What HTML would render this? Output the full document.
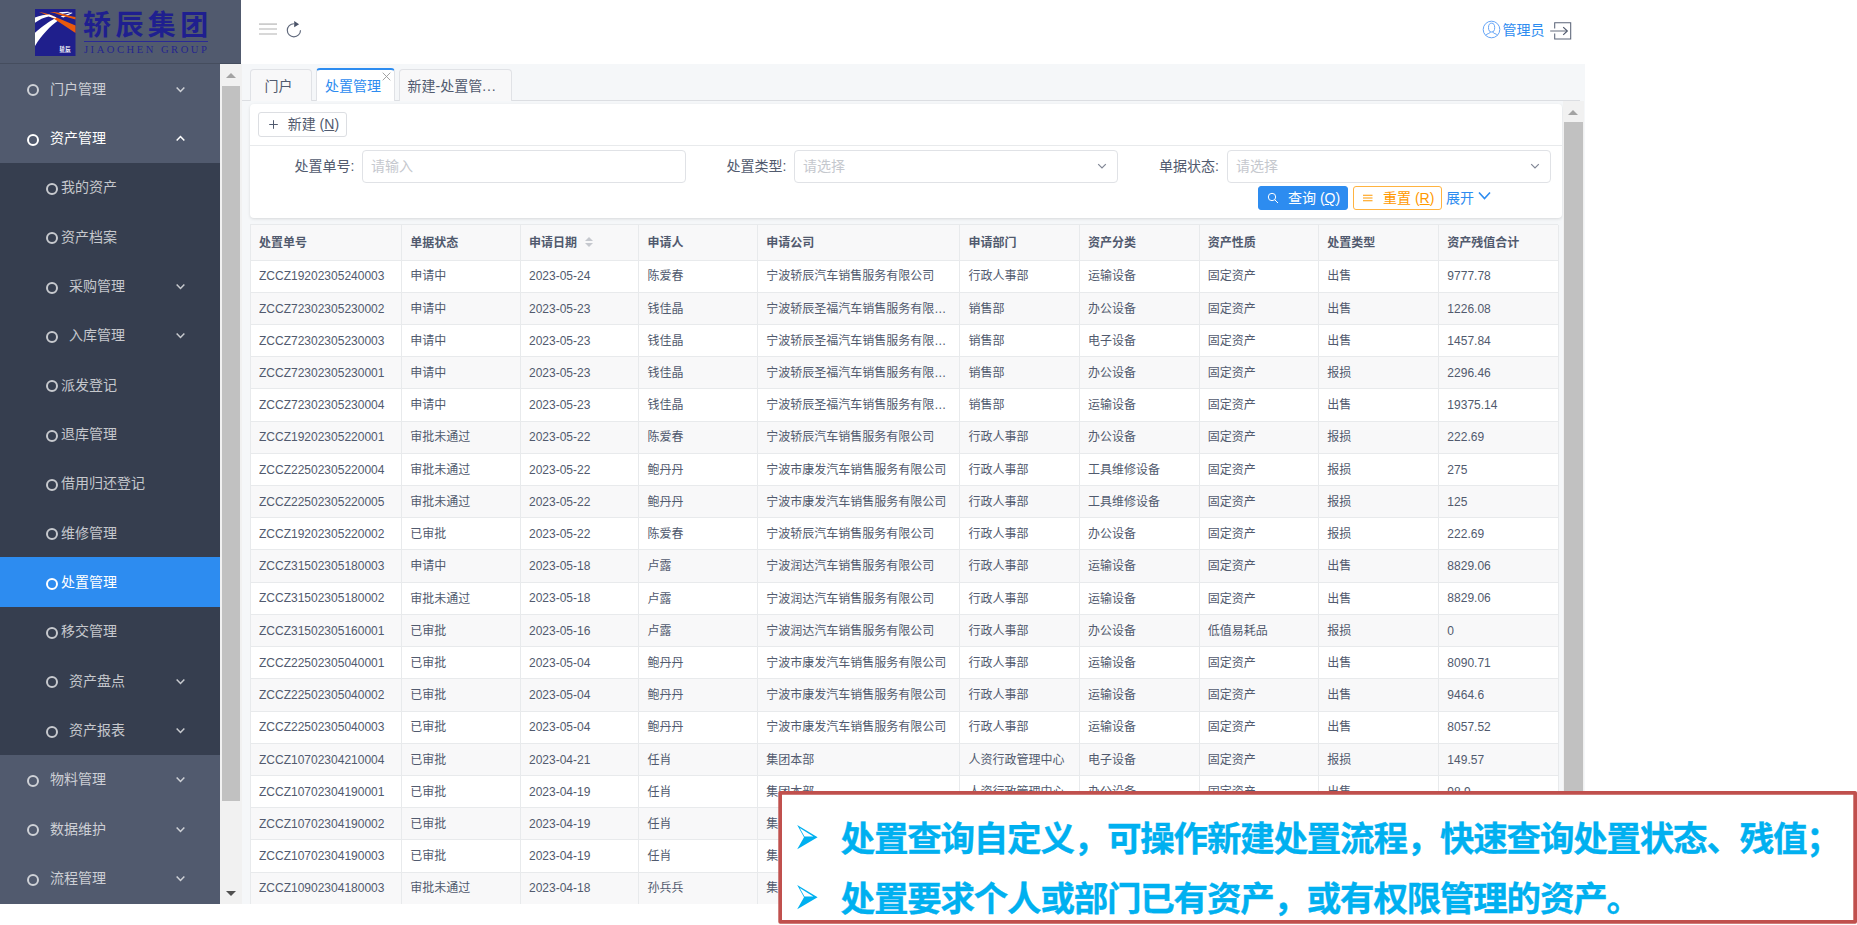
<!DOCTYPE html>
<html lang="zh-CN">
<head>
<meta charset="utf-8">
<title>处置管理</title>
<style>
*{box-sizing:border-box;margin:0;padding:0}
html,body{width:1857px;height:925px;overflow:hidden;background:#fff}
body{font-family:"Liberation Sans","Noto Sans CJK SC",sans-serif;font-size:14px;color:#515a6e;position:relative}
ul{list-style:none}
/* ---------- app frame ---------- */
#app{position:absolute;left:0;top:0;width:1585px;height:904px;background:#f5f7f9;overflow:hidden}
/* logo block */
#logo{position:absolute;left:0;top:0;width:241px;height:64px;background:#515a6e;border-bottom:1px solid #454d5e;z-index:3}
#logo .mark{position:absolute;left:35px;top:9px;width:40.5px;height:47px}
#logo .cn{position:absolute;left:83px;top:6.5px;height:38px;line-height:38px;font-size:28px;font-weight:700;color:#1f1f8f;letter-spacing:4.4px;white-space:nowrap;font-family:"Liberation Sans","Noto Sans CJK SC",sans-serif}
#logo .rule{position:absolute;left:84px;top:41px;width:124px;height:1px;background:#2a2a96}
#logo .en{position:absolute;left:84px;top:43.5px;height:12px;line-height:12px;font-size:10.6px;color:#25258f;letter-spacing:2.5px;white-space:nowrap;font-family:"Liberation Serif",serif}
/* side menu */
#side{position:absolute;left:0;top:64px;width:220px;height:840px;background:#515a6e;overflow:hidden}
#side .mi{position:relative;height:49.33px;line-height:49.33px;color:rgba(255,255,255,.72);font-size:14px;white-space:nowrap}
#side .mi span{position:absolute;left:50px;top:0.6px}
#side .mi .ring{position:absolute;left:27.3px;top:20.3px;width:12px;height:12px;border:2px solid currentColor;border-radius:50%}
#side .mi .chev{position:absolute;left:175.3px;top:19.6px;width:11px;height:11px}
#side .mi.topopen{color:#fff}
#side .mi.leaf,#side .mi.sub,#side .mi.active{background:#363e4f}
#side .mi.leaf .ring,#side .mi.sub .ring,#side .mi.active .ring{left:46px}
#side .mi.leaf span,#side .mi.active span{left:61px}
#side .mi.sub span{left:69px}
#side .mi.active{background:#2d8cf0;color:#fff}
/* side scrollbar */
.sbar{position:absolute;background:#f1f1f1}
.sbar .thumb{position:absolute;left:1.5px;right:1.5px;background:#c1c1c1}
.sbar .up,.sbar .dn{position:absolute;left:50%;width:0;height:0;border-left:5px solid transparent;border-right:5px solid transparent;margin-left:-5px}
.sbar .up{border-bottom:5px solid #a3a3a3}
.sbar .dn{border-top:5px solid #505050}
#sbar1{left:220px;top:64px;width:21.5px;height:840px}
#sbar1 .thumb{top:21.5px;height:715.5px}
#sbar1 .up{top:8.5px}
#sbar1 .dn{bottom:8px}
/* top header */
#head{position:absolute;left:241px;top:0;width:1344px;height:64px;background:#fff}
#head svg{position:absolute}
#head .user{position:absolute;left:1261.5px;top:19px;height:22px;line-height:22px;font-size:14px;color:#2d8cf0}
/* tabs */
#tabs{position:absolute;left:241.5px;top:64px;width:1343.5px;height:37px}
#tabs .line{position:absolute;left:0;top:36px;width:1338.5px;height:1px;background:#dcdee2}
.tab{position:absolute;top:5px;height:32px;line-height:32.5px;border:1px solid #e0e2e6;border-bottom:0;border-radius:4px 4px 0 0;background:#f8f8f9;font-size:14px;color:#515a6e;white-space:nowrap;padding-left:13.5px}
.tab.on{top:4px;height:33px;background:#fff;color:#2d8cf0;border-top:2px solid #2d8cf0;padding-left:8px;line-height:32.5px}
.tab .x{position:absolute;right:2.5px;top:2px;width:9px;height:9px}
/* content */
#main{position:absolute;left:241.5px;top:101px;width:1321px;height:803px;overflow:hidden}
#sbar2{left:1562.5px;top:101px;width:21.5px;height:803px}
#sbar2 .thumb{top:21px;height:740px}
#sbar2 .up{top:8.5px}
#sbar2 .dn{bottom:7px}
#card{position:absolute;left:8.5px;top:3px;width:1312px;height:114px;background:#fff;border-radius:4px;box-shadow:0 1px 3px rgba(0,0,0,.12)}
#card .hr{position:absolute;left:0;right:0;top:41px;height:1px;background:#e8eaec}
.btn{position:absolute;height:24px;line-height:22px;border:1px solid #dcdee2;border-radius:3px;background:#fff;font-size:14px;color:#515a6e;white-space:nowrap}
.btn u{text-decoration:underline}
#bnew{left:8px;top:8px;width:88.5px;height:24.5px;padding-left:28.7px;line-height:22.5px}
#bq{left:1008px;top:82px;width:90px;background:#2d8cf0;border-color:#2d8cf0;color:#fff;padding-left:29px}
#br{left:1103px;top:82px;width:89px;border-color:#ffb340;color:#ff9900;padding-left:29px}
.btn svg{position:absolute}
#more{position:absolute;left:1196px;top:82px;height:24px;line-height:24px;font-size:14px;color:#2d8cf0;white-space:nowrap}
.lab{position:absolute;top:46px;height:32px;line-height:33px;font-size:14px;color:#515a6e;text-align:right;white-space:nowrap}
.inp{position:absolute;top:46px;height:32.5px;line-height:30.5px;border:1px solid #e0e2e6;border-radius:4px;background:#fff;font-size:14px;color:#c5c8ce;padding-left:8px;white-space:nowrap}
.inp svg{position:absolute;right:10px;top:10.2px;width:10px;height:10px;color:#808695}
/* table */
#tbl{position:absolute;left:8.5px;top:123px;width:1308px;border-left:1px solid #e8eaec;border-top:1px solid #e8eaec}
table{border-collapse:separate;border-spacing:0;table-layout:fixed;width:1307.7px;font-size:12px;color:#515a6e}
th,td{border-right:1px solid #e8eaec;border-bottom:1px solid #e8eaec;text-align:left;padding:0 0 0 8px;overflow:hidden;white-space:nowrap}
th{height:35.5px;background:#f8f8f9;font-weight:700;color:#515a6e;font-size:12px}
td{height:32.22px;background:#fff}
tr.s td{background:#f8f8f9}
td .c{overflow:hidden;text-overflow:ellipsis;white-space:nowrap;padding-right:8px;position:relative;top:-1.3px}
td .c.n{top:0.2px}
th span{vertical-align:middle;position:relative;top:-0.8px}
.sort{display:inline-block;position:relative;width:9px;height:11px;margin-left:7.6px;vertical-align:middle;top:-0.2px}
.sort b{position:absolute;left:0;width:0;height:0;border-left:4.3px solid transparent;border-right:4.3px solid transparent}
.sort .u{top:0;border-bottom:4.3px solid #c5c8ce}
.sort .d{top:6.5px;border-top:4.2px solid #c5c8ce}
/* annotation callout */
#note{position:absolute;left:778px;top:791px;width:1079px;height:133px;z-index:10}
#note .frame{position:absolute;left:0;top:0;width:1079px;height:133px}
#note p{-webkit-text-stroke:0.35px #00b0f0;position:absolute;left:62.6px;height:48px;line-height:48px;font-size:34.5px;letter-spacing:-1.2px;font-weight:700;color:#00b0f0;white-space:nowrap;font-family:"Liberation Sans","Noto Sans CJK SC",sans-serif}
#note .p1{top:23.6px}
#note .p2{top:83.9px}
#note svg.ar{position:absolute;left:18px;width:23px;height:27px}
</style>
</head>
<body>
<div id="app">
  <div id="logo">
    <svg class="mark" viewBox="0 0 40.5 47">
      <rect width="40.5" height="47" fill="#1f1f8c"/>
      <path d="M0 23.8 C8 16.5 14 12.6 19.9 9.4 L23.2 11.6 C15 17.2 7 26 0 36.9 Z" fill="#fff"/>
      <path d="M25.5 7.6 L36.6 3.5 L37.6 4.1 L28.5 8.6 Z" fill="#fff"/>
      <path d="M3.9 3.1 C10 3.9 16 5.6 21 8.2 L40.5 16.5 L40.5 24 L22.4 12 C17 8.4 10 5.2 3.9 3.1 Z" fill="#ea5a0c"/>
      <path d="M14.4 3.1 C20 3 24 3.6 27.2 4.8 C32 6.4 37 7.4 40.5 7.9 L40.5 10.5 C35 9.1 30 7.6 25.2 6 C21 4.5 18 3.7 14.4 3.1 Z" fill="#ea5a0c"/>
      <path d="M0 8.6 C5 6.7 10 5.7 14.4 5.6 L21.4 8.5 L20.2 9.6 L13.6 7.4 C9 8.4 4 10.6 0 13.7 Z" fill="#fff"/>
      <path d="M23.4 3.3 L32.6 2.7 L36.2 3.2 L27.4 4.8 Z" fill="#fff"/>
      <text x="30.2" y="42" font-size="5.2" font-weight="700" fill="#fff" text-anchor="middle" letter-spacing="0.6" font-family="Liberation Sans, Noto Sans CJK SC, sans-serif">轿辰</text>
      <rect x="24.6" y="43.3" width="11.2" height="0.5" fill="#d8d8f0"/>
    </svg>
    <div class="cn">轿辰集团</div>
    <div class="rule"></div>
    <div class="en">JIAOCHEN GROUP</div>
  </div>
  <ul id="side">
<li class="mi top"><i class="ring"></i><span>门户管理</span><svg class="chev" viewBox="0 0 10 10"><path d="M1.5 3.2 L5 6.8 L8.5 3.2" fill="none" stroke="currentColor" stroke-width="1.4"/></svg></li>
<li class="mi topopen"><i class="ring"></i><span>资产管理</span><svg class="chev" viewBox="0 0 10 10"><path d="M1.5 6.8 L5 3.2 L8.5 6.8" fill="none" stroke="currentColor" stroke-width="1.4"/></svg></li>
<li class="mi leaf"><i class="ring"></i><span>我的资产</span></li>
<li class="mi leaf"><i class="ring"></i><span>资产档案</span></li>
<li class="mi sub"><i class="ring"></i><span>采购管理</span><svg class="chev" viewBox="0 0 10 10"><path d="M1.5 3.2 L5 6.8 L8.5 3.2" fill="none" stroke="currentColor" stroke-width="1.4"/></svg></li>
<li class="mi sub"><i class="ring"></i><span>入库管理</span><svg class="chev" viewBox="0 0 10 10"><path d="M1.5 3.2 L5 6.8 L8.5 3.2" fill="none" stroke="currentColor" stroke-width="1.4"/></svg></li>
<li class="mi leaf"><i class="ring"></i><span>派发登记</span></li>
<li class="mi leaf"><i class="ring"></i><span>退库管理</span></li>
<li class="mi leaf"><i class="ring"></i><span>借用归还登记</span></li>
<li class="mi leaf"><i class="ring"></i><span>维修管理</span></li>
<li class="mi active"><i class="ring"></i><span>处置管理</span></li>
<li class="mi leaf"><i class="ring"></i><span>移交管理</span></li>
<li class="mi sub"><i class="ring"></i><span>资产盘点</span><svg class="chev" viewBox="0 0 10 10"><path d="M1.5 3.2 L5 6.8 L8.5 3.2" fill="none" stroke="currentColor" stroke-width="1.4"/></svg></li>
<li class="mi sub"><i class="ring"></i><span>资产报表</span><svg class="chev" viewBox="0 0 10 10"><path d="M1.5 3.2 L5 6.8 L8.5 3.2" fill="none" stroke="currentColor" stroke-width="1.4"/></svg></li>
<li class="mi top"><i class="ring"></i><span>物料管理</span><svg class="chev" viewBox="0 0 10 10"><path d="M1.5 3.2 L5 6.8 L8.5 3.2" fill="none" stroke="currentColor" stroke-width="1.4"/></svg></li>
<li class="mi top"><i class="ring"></i><span>数据维护</span><svg class="chev" viewBox="0 0 10 10"><path d="M1.5 3.2 L5 6.8 L8.5 3.2" fill="none" stroke="currentColor" stroke-width="1.4"/></svg></li>
<li class="mi top"><i class="ring"></i><span>流程管理</span><svg class="chev" viewBox="0 0 10 10"><path d="M1.5 3.2 L5 6.8 L8.5 3.2" fill="none" stroke="currentColor" stroke-width="1.4"/></svg></li>
  </ul>
  <div class="sbar" id="sbar1"><i class="up"></i><div class="thumb"></div><i class="dn"></i></div>

  <div id="head">
    <svg style="left:17.6px;top:22px;width:18.2px;height:14px" viewBox="0 0 18.2 14"><path d="M0 2.05H18.2M0 7H18.2M0 12H18.2" stroke="#cccccc" stroke-width="1.7" fill="none"/></svg>
    <svg style="left:44px;top:19px;width:18px;height:20px" viewBox="0 0 18 20"><path d="M8.9 4.7 A6.6 6.6 0 1 0 15.5 11.3" fill="none" stroke="#5f687b" stroke-width="1.15"/><path d="M9.2 1.9 L14.1 5.3 L9.2 8.2 Z" fill="#4a5368"/></svg>
    <svg style="left:1240.6px;top:20.4px;width:19px;height:19px" viewBox="0 0 19 19"><circle cx="9.5" cy="9.5" r="8.3" fill="none" stroke="#5c9ff5" stroke-width="0.95"/><ellipse cx="9.6" cy="7.6" rx="3.1" ry="4.4" fill="none" stroke="#5c9ff5" stroke-width="0.95"/><path d="M8.2 11.6 V12.2 C8.2 13.7 4.7 13.4 3.6 15.4 M11 11.6 V12.2 C11 13.7 14.5 13.4 15.6 15.4" fill="none" stroke="#5c9ff5" stroke-width="0.95"/></svg>
    <div class="user">管理员</div>
    <svg style="left:1308px;top:21px;width:24px;height:20px" viewBox="0 0 24 20"><path d="M5.7 7.6V1.7H21.7V17.9H5.7V12.4" fill="none" stroke="#5b6478" stroke-width="1.05"/><path d="M1.2 10H18" fill="none" stroke="#a4a9b3" stroke-width="1.7"/><path d="M14.2 6.1 L18.3 10 L14.2 13.9" fill="none" stroke="#515a6e" stroke-width="1.2"/></svg>
  </div>

  <div id="tabs">
    <div class="line"></div>
    <div class="tab" style="left:8.5px;width:62px">门户</div>
    <div class="tab on" style="left:74.5px;width:78.5px">处置管理<svg class="x" viewBox="0 0 9 9"><path d="M0.7 0.7L8.3 8.3M8.3 0.7L0.7 8.3" stroke="#999" stroke-width="0.9"/></svg></div>
    <div class="tab" style="left:157.5px;width:112.5px;padding-left:7.5px">新建-处置管<span style="letter-spacing:0.9px">...</span></div>
  </div>

  <div id="main">
    <div id="card">
      <div class="btn" id="bnew"><svg style="left:9.5px;top:7px;width:9px;height:9px" viewBox="0 0 9 9"><path d="M4.5 0.2V8.8M0.2 4.5H8.8" stroke="#515a6e" stroke-width="1" fill="none"/></svg>新建 (<u>N</u>)</div>
      <div class="hr"></div>
      <div class="lab" style="left:20px;width:84.5px">处置单号:</div>
      <div class="inp" style="left:112px;width:324px">请输入</div>
      <div class="lab" style="left:452px;width:84.5px">处置类型:</div>
      <div class="inp" style="left:544px;width:324px">请选择<svg viewBox="0 0 10 10"><path d="M1.2 3.2 L5 7 L8.8 3.2" fill="none" stroke="currentColor" stroke-width="1.2"/></svg></div>
      <div class="lab" style="left:884.5px;width:84.5px">单据状态:</div>
      <div class="inp" style="left:977px;width:323.5px">请选择<svg viewBox="0 0 10 10"><path d="M1.2 3.2 L5 7 L8.8 3.2" fill="none" stroke="currentColor" stroke-width="1.2"/></svg></div>
      <div class="btn" id="bq"><svg style="left:8px;top:5px;width:12px;height:12px" viewBox="0 0 12 12"><circle cx="5" cy="5" r="3.7" fill="none" stroke="#fff" stroke-width="1"/><path d="M7.8 7.8L11 11" stroke="#fff" stroke-width="1"/></svg>查询 (<u>Q</u>)</div>
      <div class="btn" id="br"><svg style="left:9px;top:7px;width:9.5px;height:8px" viewBox="0 0 9.5 8"><path d="M0 1.3H9.5M0 4H9.5M0 6.7H9.5" stroke="#ff9900" stroke-width="1.1"/></svg>重置 (<u>R</u>)</div>
      <div id="more">展开<svg style="position:absolute;left:32px;top:5px;width:13px;height:10px" viewBox="0 0 13 10"><path d="M1 1.5 L6.5 7.5 L12 1.5" fill="none" stroke="#2d8cf0" stroke-width="1.6"/></svg></div>
    </div>
    <div id="tbl">
      <table>
        <colgroup><col style="width:151.3px"><col style="width:118.7px"><col style="width:118.5px"><col style="width:118.8px"><col style="width:202.1px"><col style="width:119.7px"><col style="width:119.8px"><col style="width:119.5px"><col style="width:120px"><col style="width:119.3px"></colgroup>
        <thead><tr><th><span>处置单号</span></th><th><span>单据状态</span></th><th><span>申请日期</span><i class="sort"><b class="u"></b><b class="d"></b></i></th><th><span>申请人</span></th><th><span>申请公司</span></th><th><span>申请部门</span></th><th><span>资产分类</span></th><th><span>资产性质</span></th><th><span>处置类型</span></th><th><span>资产残值合计</span></th></tr></thead>
        <tbody>
<tr class=""><td><div class="c n">ZCCZ19202305240003</div></td><td><div class="c">申请中</div></td><td><div class="c n">2023-05-24</div></td><td><div class="c">陈爱春</div></td><td><div class="c">宁波轿辰汽车销售服务有限公司</div></td><td><div class="c">行政人事部</div></td><td><div class="c">运输设备</div></td><td><div class="c">固定资产</div></td><td><div class="c">出售</div></td><td><div class="c n">9777.78</div></td></tr>
<tr class="s"><td><div class="c n">ZCCZ72302305230002</div></td><td><div class="c">申请中</div></td><td><div class="c n">2023-05-23</div></td><td><div class="c">钱佳晶</div></td><td><div class="c">宁波轿辰圣福汽车销售服务有限公司</div></td><td><div class="c">销售部</div></td><td><div class="c">办公设备</div></td><td><div class="c">固定资产</div></td><td><div class="c">出售</div></td><td><div class="c n">1226.08</div></td></tr>
<tr class=""><td><div class="c n">ZCCZ72302305230003</div></td><td><div class="c">申请中</div></td><td><div class="c n">2023-05-23</div></td><td><div class="c">钱佳晶</div></td><td><div class="c">宁波轿辰圣福汽车销售服务有限公司</div></td><td><div class="c">销售部</div></td><td><div class="c">电子设备</div></td><td><div class="c">固定资产</div></td><td><div class="c">出售</div></td><td><div class="c n">1457.84</div></td></tr>
<tr class="s"><td><div class="c n">ZCCZ72302305230001</div></td><td><div class="c">申请中</div></td><td><div class="c n">2023-05-23</div></td><td><div class="c">钱佳晶</div></td><td><div class="c">宁波轿辰圣福汽车销售服务有限公司</div></td><td><div class="c">销售部</div></td><td><div class="c">办公设备</div></td><td><div class="c">固定资产</div></td><td><div class="c">报损</div></td><td><div class="c n">2296.46</div></td></tr>
<tr class=""><td><div class="c n">ZCCZ72302305230004</div></td><td><div class="c">申请中</div></td><td><div class="c n">2023-05-23</div></td><td><div class="c">钱佳晶</div></td><td><div class="c">宁波轿辰圣福汽车销售服务有限公司</div></td><td><div class="c">销售部</div></td><td><div class="c">运输设备</div></td><td><div class="c">固定资产</div></td><td><div class="c">出售</div></td><td><div class="c n">19375.14</div></td></tr>
<tr class="s"><td><div class="c n">ZCCZ19202305220001</div></td><td><div class="c">审批未通过</div></td><td><div class="c n">2023-05-22</div></td><td><div class="c">陈爱春</div></td><td><div class="c">宁波轿辰汽车销售服务有限公司</div></td><td><div class="c">行政人事部</div></td><td><div class="c">办公设备</div></td><td><div class="c">固定资产</div></td><td><div class="c">报损</div></td><td><div class="c n">222.69</div></td></tr>
<tr class=""><td><div class="c n">ZCCZ22502305220004</div></td><td><div class="c">审批未通过</div></td><td><div class="c n">2023-05-22</div></td><td><div class="c">鲍丹丹</div></td><td><div class="c">宁波市康发汽车销售服务有限公司</div></td><td><div class="c">行政人事部</div></td><td><div class="c">工具维修设备</div></td><td><div class="c">固定资产</div></td><td><div class="c">报损</div></td><td><div class="c n">275</div></td></tr>
<tr class="s"><td><div class="c n">ZCCZ22502305220005</div></td><td><div class="c">审批未通过</div></td><td><div class="c n">2023-05-22</div></td><td><div class="c">鲍丹丹</div></td><td><div class="c">宁波市康发汽车销售服务有限公司</div></td><td><div class="c">行政人事部</div></td><td><div class="c">工具维修设备</div></td><td><div class="c">固定资产</div></td><td><div class="c">报损</div></td><td><div class="c n">125</div></td></tr>
<tr class=""><td><div class="c n">ZCCZ19202305220002</div></td><td><div class="c">已审批</div></td><td><div class="c n">2023-05-22</div></td><td><div class="c">陈爱春</div></td><td><div class="c">宁波轿辰汽车销售服务有限公司</div></td><td><div class="c">行政人事部</div></td><td><div class="c">办公设备</div></td><td><div class="c">固定资产</div></td><td><div class="c">报损</div></td><td><div class="c n">222.69</div></td></tr>
<tr class="s"><td><div class="c n">ZCCZ31502305180003</div></td><td><div class="c">申请中</div></td><td><div class="c n">2023-05-18</div></td><td><div class="c">卢露</div></td><td><div class="c">宁波润达汽车销售服务有限公司</div></td><td><div class="c">行政人事部</div></td><td><div class="c">运输设备</div></td><td><div class="c">固定资产</div></td><td><div class="c">出售</div></td><td><div class="c n">8829.06</div></td></tr>
<tr class=""><td><div class="c n">ZCCZ31502305180002</div></td><td><div class="c">审批未通过</div></td><td><div class="c n">2023-05-18</div></td><td><div class="c">卢露</div></td><td><div class="c">宁波润达汽车销售服务有限公司</div></td><td><div class="c">行政人事部</div></td><td><div class="c">运输设备</div></td><td><div class="c">固定资产</div></td><td><div class="c">出售</div></td><td><div class="c n">8829.06</div></td></tr>
<tr class="s"><td><div class="c n">ZCCZ31502305160001</div></td><td><div class="c">已审批</div></td><td><div class="c n">2023-05-16</div></td><td><div class="c">卢露</div></td><td><div class="c">宁波润达汽车销售服务有限公司</div></td><td><div class="c">行政人事部</div></td><td><div class="c">办公设备</div></td><td><div class="c">低值易耗品</div></td><td><div class="c">报损</div></td><td><div class="c n">0</div></td></tr>
<tr class=""><td><div class="c n">ZCCZ22502305040001</div></td><td><div class="c">已审批</div></td><td><div class="c n">2023-05-04</div></td><td><div class="c">鲍丹丹</div></td><td><div class="c">宁波市康发汽车销售服务有限公司</div></td><td><div class="c">行政人事部</div></td><td><div class="c">运输设备</div></td><td><div class="c">固定资产</div></td><td><div class="c">出售</div></td><td><div class="c n">8090.71</div></td></tr>
<tr class="s"><td><div class="c n">ZCCZ22502305040002</div></td><td><div class="c">已审批</div></td><td><div class="c n">2023-05-04</div></td><td><div class="c">鲍丹丹</div></td><td><div class="c">宁波市康发汽车销售服务有限公司</div></td><td><div class="c">行政人事部</div></td><td><div class="c">运输设备</div></td><td><div class="c">固定资产</div></td><td><div class="c">出售</div></td><td><div class="c n">9464.6</div></td></tr>
<tr class=""><td><div class="c n">ZCCZ22502305040003</div></td><td><div class="c">已审批</div></td><td><div class="c n">2023-05-04</div></td><td><div class="c">鲍丹丹</div></td><td><div class="c">宁波市康发汽车销售服务有限公司</div></td><td><div class="c">行政人事部</div></td><td><div class="c">运输设备</div></td><td><div class="c">固定资产</div></td><td><div class="c">出售</div></td><td><div class="c n">8057.52</div></td></tr>
<tr class="s"><td><div class="c n">ZCCZ10702304210004</div></td><td><div class="c">已审批</div></td><td><div class="c n">2023-04-21</div></td><td><div class="c">任肖</div></td><td><div class="c">集团本部</div></td><td><div class="c">人资行政管理中心</div></td><td><div class="c">电子设备</div></td><td><div class="c">固定资产</div></td><td><div class="c">报损</div></td><td><div class="c n">149.57</div></td></tr>
<tr class=""><td><div class="c n">ZCCZ10702304190001</div></td><td><div class="c">已审批</div></td><td><div class="c n">2023-04-19</div></td><td><div class="c">任肖</div></td><td><div class="c">集团本部</div></td><td><div class="c">人资行政管理中心</div></td><td><div class="c">办公设备</div></td><td><div class="c">固定资产</div></td><td><div class="c">出售</div></td><td><div class="c n">98.9</div></td></tr>
<tr class="s"><td><div class="c n">ZCCZ10702304190002</div></td><td><div class="c">已审批</div></td><td><div class="c n">2023-04-19</div></td><td><div class="c">任肖</div></td><td><div class="c">集团本部</div></td><td><div class="c">人资行政管理中心</div></td><td><div class="c">办公设备</div></td><td><div class="c">固定资产</div></td><td><div class="c">出售</div></td><td><div class="c n">98.9</div></td></tr>
<tr class=""><td><div class="c n">ZCCZ10702304190003</div></td><td><div class="c">已审批</div></td><td><div class="c n">2023-04-19</div></td><td><div class="c">任肖</div></td><td><div class="c">集团本部</div></td><td><div class="c">人资行政管理中心</div></td><td><div class="c">办公设备</div></td><td><div class="c">固定资产</div></td><td><div class="c">出售</div></td><td><div class="c n">98.9</div></td></tr>
<tr class="s"><td><div class="c n">ZCCZ10902304180003</div></td><td><div class="c">审批未通过</div></td><td><div class="c n">2023-04-18</div></td><td><div class="c">孙兵兵</div></td><td><div class="c">集团本部</div></td><td><div class="c">人资行政管理中心</div></td><td><div class="c">办公设备</div></td><td><div class="c">固定资产</div></td><td><div class="c">出售</div></td><td><div class="c n">98.9</div></td></tr>
        </tbody>
      </table>
    </div>
  </div>
  <div class="sbar" id="sbar2"><i class="up"></i><div class="thumb"></div><i class="dn"></i></div>
</div>

<div id="note">
  <svg class="frame" viewBox="0 0 1079 133"><rect x="2.15" y="1.85" width="1075" height="129" fill="#fff" stroke="#c0504d" stroke-width="3.7" stroke-linejoin="round"/></svg>
  <svg class="ar" style="top:33px" viewBox="0 0 23 27"><path d="M1.2 1.1 L21.6 13.2 L1.2 25.3 L8 13.2 Z M3.7 4.1 L17.4 12.4 L8.5 12.4 Z" fill="#00b0f0" fill-rule="evenodd"/></svg>
  <p class="p1">处置查询自定义，可操作新建处置流程，快速查询处置状态、残值；</p>
  <svg class="ar" style="top:92.8px" viewBox="0 0 23 27"><path d="M1.2 1.1 L21.6 13.2 L1.2 25.3 L8 13.2 Z M3.7 4.1 L17.4 12.4 L8.5 12.4 Z" fill="#00b0f0" fill-rule="evenodd"/></svg>
  <p class="p2">处置要求个人或部门已有资产，或有权限管理的资产。</p>
</div>
</body>
</html>
